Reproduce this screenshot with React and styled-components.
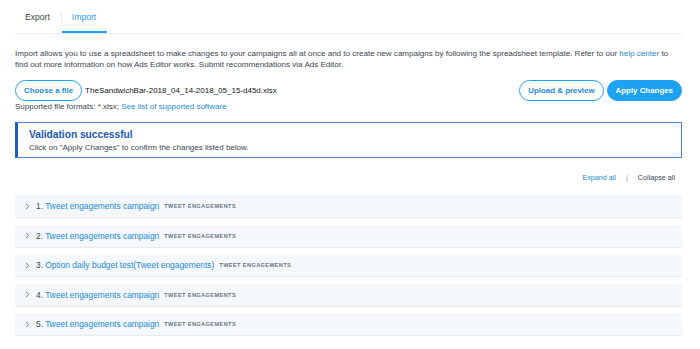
import React from 'react'
import styled, { createGlobalStyle } from 'styled-components'

const GlobalStyle = createGlobalStyle`
  body {
    margin: 0;
    background: #ffffff;
    font-family: "Liberation Sans", Arial, sans-serif;
    color: #14171a;
  }
`

const rows = [
  { n: 1, title: 'Tweet engagements campaign' },
  { n: 2, title: 'Tweet engagements campaign' },
  { n: 3, title: 'Option daily budget test(Tweet engagements)' },
  { n: 4, title: 'Tweet engagements campaign' },
  { n: 5, title: 'Tweet engagements campaign' },
]

const Chevron = () => (
  <svg width="5" height="7" viewBox="0 0 5 7">
    <path d="M1 0.8 L3.8 3.5 L1 6.2" fill="none" stroke="#657786" strokeWidth="1" />
  </svg>
)

const App = () => {
  return (
    <>
      <GlobalStyle />
      <Page>
        <Tabs>
          <Tab>Export</Tab>
          <TabDivider />
          <Tab active>Import</Tab>
        </Tabs>

        <Intro>
          Import allows you to use a spreadsheet to make changes to your campaigns all at once and to create new campaigns by following the spreadsheet template. Refer to our <Link>help center</Link> to
          <br />
          find out more information on how Ads Editor works. Submit recommendations via Ads Editor.
        </Intro>

        <ActionRow>
          <FileGroup>
            <PillButton>Choose a file</PillButton>
            <FileName>TheSandwichBar-2018_04_14-2018_05_15-d45d.xlsx</FileName>
          </FileGroup>
          <ButtonGroup>
            <PillButton>Upload &amp; preview</PillButton>
            <PillButton primary>Apply Changes</PillButton>
          </ButtonGroup>
        </ActionRow>
        <Supported>
          Supported file formats: *.xlsx; <Link>See list of supported software</Link>
        </Supported>

        <Notice>
          <NoticeTitle>Validation successful</NoticeTitle>
          <NoticeText>Click on "Apply Changes" to confirm the changes listed below.</NoticeText>
        </Notice>

        <Toggles>
          <Link>Expand all</Link>
          <Sep>|</Sep>
          <span>Collapse all</span>
        </Toggles>

        <List>
          {rows.map((r) => (
            <Row key={r.n}>
              <Chevron />
              <RowTitle>
                <Num>{r.n}.</Num> <Link>{r.title}</Link>
              </RowTitle>
              <Objective>TWEET ENGAGEMENTS</Objective>
            </Row>
          ))}
        </List>
      </Page>
    </>
  )
}

const Page = styled.div`
  padding: 0 18px 0 15px;
  width: 667px;
`

const Tabs = styled.div`
  display: flex;
  align-items: center;
  height: 33px;
  border-bottom: 1px solid #e6ecf0;
`

const Tab = styled.div`
  height: 33px;
  box-sizing: border-box;
  display: flex;
  align-items: center;
  padding: 2px 11px 0 10px;
  font-size: 8.6px;
  color: ${(p) => (p.active ? '#2a9bf0' : '#3b4650')};
  border-bottom: 2px solid ${(p) => (p.active ? '#1da1f2' : 'transparent')};
`

const TabDivider = styled.div`
  width: 1px;
  height: 10px;
  background: #e6ecf0;
`

const Intro = styled.p`
  margin: 14px 0 0;
  font-size: 8.05px;
  line-height: 11px;
  color: #3b4650;
  white-space: nowrap;
`

const Link = styled.span`
  color: #1b8ad6;
`

const ActionRow = styled.div`
  display: flex;
  justify-content: space-between;
  align-items: center;
  margin-top: 10px;
`

const FileGroup = styled.div`
  display: flex;
  align-items: center;
  gap: 3px;
`

const ButtonGroup = styled.div`
  display: flex;
  align-items: center;
  gap: 3px;
`

const PillButton = styled.div`
  height: 21px;
  box-sizing: border-box;
  display: flex;
  align-items: center;
  padding: 0 8px;
  border-radius: 11px;
  border: 1px solid #1da1f2;
  background: ${(p) => (p.primary ? '#1da1f2' : '#ffffff')};
  color: ${(p) => (p.primary ? '#ffffff' : '#1b8ad6')};
  font-size: 7.9px;
  font-weight: bold;
  white-space: nowrap;
`

const FileName = styled.span`
  font-size: 8px;
  color: #14171a;
`

const Supported = styled.div`
  margin-top: 1px;
  font-size: 8px;
  line-height: 10px;
  color: #3b4650;
`

const Notice = styled.div`
  margin-top: 10px;
  height: 36px;
  box-sizing: border-box;
  border: 1px solid #4f86cf;
  border-left: 3px solid #1c5fbf;
  padding: 5px 0 0 11px;
`

const NoticeTitle = styled.div`
  font-size: 10.2px;
  font-weight: bold;
  color: #1c58b8;
  line-height: 13px;
`

const NoticeText = styled.div`
  margin-top: 2px;
  font-size: 8px;
  color: #3b4650;
`

const Toggles = styled.div`
  display: flex;
  justify-content: flex-end;
  align-items: center;
  gap: 10px;
  margin-top: 15px;
  padding-right: 7px;
  font-size: 7.2px;
  color: #3b4650;
`

const Sep = styled.span`
  color: #8899a6;
`

const List = styled.div`
  display: flex;
  flex-direction: column;
  gap: 6.5px;
  margin-top: 13px;
`

const Row = styled.div`
  height: 23px;
  box-sizing: border-box;
  display: flex;
  align-items: center;
  gap: 5px;
  padding-left: 10px;
  background: #f5f8fa;
  border-bottom: 1px solid #e6ecf0;
`

const RowTitle = styled.div`
  font-size: 8.4px;
  margin-left: 1px;
`

const Num = styled.span`
  color: #3b4650;
`

const Objective = styled.span`
  font-size: 5.6px;
  font-weight: bold;
  letter-spacing: 0.4px;
  color: #657786;
`

export default App
